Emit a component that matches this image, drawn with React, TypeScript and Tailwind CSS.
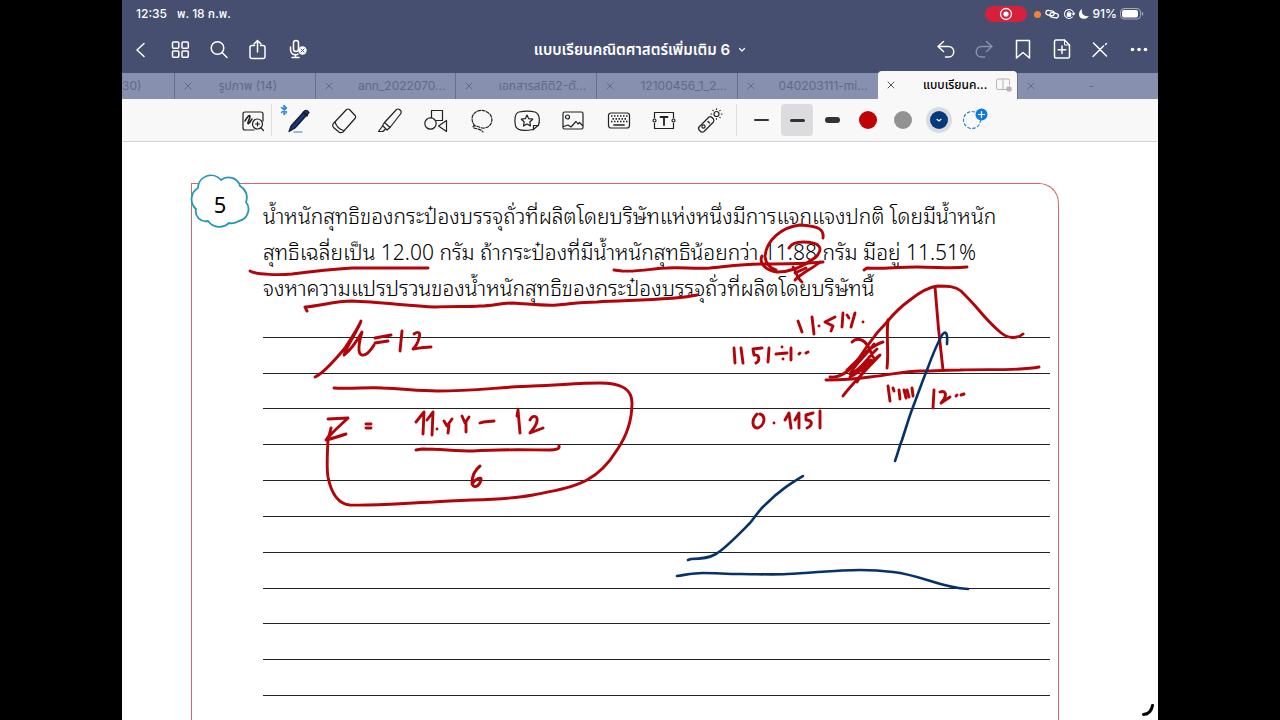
import type { ReactNode } from "react";

type IconProps = { children: ReactNode; size?: string; width?: number; view?: string };

function Icon({ children, size = "size-7", width = 1.2, view = "0 0 28 28" }: IconProps) {
  return (
    <svg
      className={`${size} shrink-0`}
      viewBox={view}
      fill="none"
      stroke="currentColor"
      strokeWidth={width}
      strokeLinecap="round"
      strokeLinejoin="round"
      aria-hidden="true"
    >
      {children}
    </svg>
  );
}

const navLeft = [
  { label: "Back", icon: <path d="M16 7.500 L9 14 L16 20.500" /> },
  {
    label: "Thumbnails",
    icon: (
      <>
        <rect x="5.500" y="6" width="6.300" height="6.300" rx="1" />
        <rect x="15" y="6" width="6.300" height="6.300" rx="1" />
        <rect x="5.500" y="15" width="6.300" height="6.300" rx="1" />
        <rect x="15" y="15" width="6.300" height="6.300" rx="1" />
      </>
    ),
  },
  {
    label: "Search",
    icon: (
      <>
        <circle cx="11.500" cy="12" r="6.300" />
        <path d="M16 16.500 L21 21.500" />
      </>
    ),
  },
  {
    label: "Share",
    icon: (
      <>
        <path d="M9.500 9.500 H7 Q5 9.500 5 11.500 V20.500 Q5 22.500 7 22.500 H18 Q20 22.500 20 20.500 V11.500 Q20 9.500 18 9.500 H15.500" />
        <path d="M12.500 16 V4.500 M9 8 L12.500 4.500 L16 8" />
      </>
    ),
  },
  {
    label: "Record",
    icon: (
      <>
        <rect x="9.500" y="4.500" width="5" height="11" rx="2.500" />
        <path d="M6.500 11 V13 C6.500 20 13 19 14 18 M11.500 18.500 V21.500 M8 21.500 H15" />
        <circle cx="18.500" cy="14.500" r="4.200" fill="currentColor" stroke="none" />
        <path d="M17 13 L20 16 M20 13 L17 16" stroke="#464f70" strokeWidth="1" />
      </>
    ),
  },
];

const navRight = [
  {
    label: "Undo",
    icon: <path d="M12.500 5.500 L7 10.500 L12.500 15.500 M7 10.500 H17.500 C24.500 10.500 24.500 21 17.500 21 H14.500" />,
  },
  {
    label: "Redo",
    faded: true,
    icon: <path d="M16.500 5.500 L22 10.500 L16.500 15.500 M22 10.500 H11.500 C4.500 10.500 4.500 21 11.500 21 H14.500" />,
  },
  { label: "Bookmark", icon: <path d="M7.500 4.500 H20.500 V22 L14 16.500 L7.500 22 Z" /> },
  {
    label: "Add page",
    icon: (
      <>
        <path d="M17.500 4 H9 Q7.500 4 7.500 5.500 V20.500 Q7.500 22 9 22 H21 Q22.500 22 22.500 20.500 V9 Z" />
        <path d="M17.500 4 V9 H22.500" strokeWidth="1" />
        <path d="M15 10 V17.500 M11.200 13.700 H18.800" />
      </>
    ),
  },
  {
    label: "Read only",
    icon: <path d="M7.500 7 L20.500 20 M8 19.500 L7 20.500 M8 19.500 L17.500 10 M19.500 8.500 L20.500 7.500" />,
  },
  {
    label: "More",
    icon: (
      <g fill="currentColor" stroke="none">
        <circle cx="7.500" cy="13.500" r="1.800" />
        <circle cx="14" cy="13.500" r="1.800" />
        <circle cx="20.500" cy="13.500" r="1.800" />
      </g>
    ),
  },
];

const tabs = [
  { name: "รูปภาพ (14)" },
  { name: "ann_2022070...", end: true },
  { name: "เอกสารสถิติ2-ตั...", end: true },
  { name: "12100456_1_2...", end: true },
  { name: "040203111-mi...", end: true },
  { name: "แบบเรียนค...", active: true },
  { name: "-" },
];

const tools = [
  {
    label: "Zoom window",
    icon: (
      <>
        <path d="M15 23 H6 Q4 23 4 21 V7 Q4 5 6 5 H22 Q24 5 24 7 V14" />
        <path d="M6 14 C8 10 11 7 11 9.500 C11 12 8 15.500 9 16.500 C10 17.500 12 13 13 12" strokeWidth="1.600" />
        <circle cx="18.500" cy="17" r="5" fill="#f8f8f8" />
        <path d="M22 21 L24.500 23.500 M18.500 15 V19 M16.500 17 H20.500" />
      </>
    ),
  },
  {
    label: "Pen",
    icon: (
      <>
        <path d="M4 24.500 L6 19 L20 3.500 Q22.500 2.500 24 5.500 L10 21 Z" fill="#173a74" stroke="#141c30" />
        <path d="M18.500 5.500 L22 8.500" stroke="#141c30" strokeWidth="2" />
        <path d="M9 25 H17" stroke="#3d7cb8" />
      </>
    ),
  },
  {
    label: "Eraser",
    icon: (
      <>
        <path d="M3 17 L16.500 2.500 Q18 1.500 19.500 2.500 L25.500 9 Q26 10.500 25 11.500 L13 25 Q11.500 26 9.500 25.500 L3.500 20.500 Q2 18.500 3 17 Z" />
        <path d="M5 15 Q7 21.500 13.500 23.500" />
      </>
    ),
  },
  {
    label: "Highlighter",
    icon: (
      <>
        <path d="M8.500 15.500 L20.500 2.500 Q22 1.500 23.500 2.500 L25 4 Q25.500 6 24.500 7 L14 20.500 Z" />
        <path d="M8.500 15.500 L6.500 18.500 L11 23 L14 20.500 M6.500 19 L2.500 24.500 L7 24.500 L9.500 22" />
      </>
    ),
  },
  {
    label: "Shape",
    icon: (
      <>
        <rect x="9.500" y="3.500" width="11" height="10" />
        <circle cx="8.500" cy="16.500" r="5.700" fill="#f8f8f8" />
        <path d="M24.500 13.500 V24.500 L16.500 19 Z" fill="#f8f8f8" />
      </>
    ),
  },
  {
    label: "Lasso",
    icon: (
      <path d="M7 19 C-1 9 9 1 17 4 C28 8 25 22 14 21 C10 20 6 17 5 20 C5 22 12 21 15 25" strokeDasharray="3 1.500" />
    ),
  },
  {
    label: "Stickers",
    icon: (
      <>
        <path d="M20 22.500 C12 24 4 24 2.500 19 C1 13 2 6 6 5 C11 4 18 4 22 5 C27 7 27 14 25.500 18 L20.500 22.500 V18.500 H25.500" />
        <path d="M14 8 L15.700 11.700 L19.700 12.200 L16.800 15 L17.500 18.900 L14 17 L10.500 18.900 L11.200 15 L8.300 12.200 L12.300 11.700 Z" />
      </>
    ),
  },
  {
    label: "Image",
    icon: (
      <>
        <rect x="4" y="5" width="20" height="17" rx="1.500" />
        <circle cx="8.500" cy="10" r="2" />
        <path d="M4.500 19.500 L9 18 L12 20 L17 14.500 L19 17 L20.500 15.500 L23.500 18.500" />
      </>
    ),
  },
  {
    label: "Keyboard",
    icon: (
      <>
        <rect x="3.500" y="6" width="21" height="15" rx="2.500" />
        <path
          d="M6 9 H22.500 M7.500 11.800 H21 M6 14.500 H22.500"
          strokeWidth="1.700"
          strokeDasharray="1.500 1.500"
          strokeLinecap="butt"
        />
        <path d="M9 18 H19" strokeWidth="1.700" />
      </>
    ),
  },
  {
    label: "Text",
    icon: (
      <>
        <path d="M4.500 11 V5.500 H23.500 V11 M4.500 16 V21.500 H23.500 V16" />
        <circle cx="4.500" cy="13.500" r="1.500" />
        <circle cx="23.500" cy="13.500" r="1.500" />
        <path d="M10.500 10 H17.500 M14 10 V18" strokeWidth="1.800" />
      </>
    ),
  },
  {
    label: "Laser pointer",
    icon: (
      <>
        <path d="M3 20 L13 10 Q14.500 9 16 10.500 L17.500 12 Q18.500 13.500 17.500 15 L8 24.500 Q6 26 4 24 Q1.500 21.500 3 20 Z" />
        <circle cx="7.500" cy="19.500" r="1.600" />
        <path d="M12 14.500 L13.500 16" />
        <circle cx="20.500" cy="7" r="2.500" />
        <path d="M20.500 1.800 V2.500 M20.500 11.500 V12.200 M26 7 H25.300 M15.700 7 H15 M16.800 3.300 L17.200 3.700 M24.200 10.700 L23.800 10.300 M24.200 3.300 L23.800 3.700" />
      </>
    ),
  },
];

function StatusBar() {
  return (
    <div className="flex h-7 items-center justify-between pr-[14px] pl-[14px] text-xs font-medium">
      <div className="flex gap-[10px]">
        <span>12:35</span>
        <span>พ. 18 ก.พ.</span>
      </div>
      <div className="flex items-center gap-[3px]">
        <span className="mr-1 flex h-4 w-[42px] items-center justify-center rounded-lg bg-[#d6203c]">
          <Icon size="size-4" view="0 0 16 16" width={1.300}>
            <circle cx="8" cy="8" r="5.500" />
            <circle cx="8" cy="8" r="2.600" fill="currentColor" stroke="none" />
          </Icon>
        </span>
        <span className="size-[7px] rounded-full bg-[#ee8438]" />
        <Icon size="size-4" view="0 0 16 16" width={1.300}>
          <rect x="2" y="4.500" width="8.500" height="4.500" rx="2.200" transform="rotate(12 5 6)" />
          <rect x="6" y="7" width="8.500" height="4.500" rx="2.200" transform="rotate(12 10 9)" />
        </Icon>
        <Icon size="size-3" view="0 0 14 14" width={1.200}>
          <path d="M11 10.500 A5.300 5.300 0 1 1 12.300 6.500 M10.500 6.500 L12.300 8 L13.700 6" />
          <rect x="5" y="6.500" width="4" height="3" fill="currentColor" />
          <path d="M5.500 6.500 V5.500 Q7 3 8.500 5.500 V6.500" />
        </Icon>
        <Icon size="size-3" view="0 0 12 12">
          <path d="M4 1 C3 6 6 9 11 8 C8 12.500 0.500 11.500 1 6 C1.200 3.500 2.500 1.500 4 1 Z" fill="currentColor" stroke="none" />
        </Icon>
        <span>91%</span>
        <Icon size="h-3 w-6" view="0 0 24 12">
          <rect x="0.500" y="0.500" width="20" height="10.500" rx="3.500" stroke="#a3a9bd" strokeWidth="1" />
          <rect x="2" y="2" width="16" height="7.500" rx="2" fill="currentColor" stroke="none" />
          <path d="M22.500 4.500 V7" stroke="#a3a9bd" />
        </Icon>
      </div>
    </div>
  );
}

function NavBar() {
  return (
    <div className="flex h-[45px] items-start">
      <div className="flex w-[232px]">
        {navLeft.map((item) => (
          <button key={item.label} aria-label={item.label} className="flex h-11 w-[39px] items-center justify-center">
            <Icon width={1.500}>{item.icon}</Icon>
          </button>
        ))}
      </div>
      <h1 className="flex h-11 flex-1 items-center justify-center gap-2 text-[15px] font-semibold whitespace-nowrap">
        แบบเรียนคณิตศาสตร์เพิ่มเติม 6
        <Icon size="size-2" view="0 0 8 8">
          <path d="M1.500 2.500 L4 5 L6.500 2.500" />
        </Icon>
      </h1>
      <div className="flex w-[232px]">
        {navRight.map((item) => (
          <button
            key={item.label}
            aria-label={item.label}
            className={`flex h-11 flex-1 items-center justify-center ${item.faded ? "text-[#8a91ab]" : ""}`}
          >
            <Icon width={1.500}>{item.icon}</Icon>
          </button>
        ))}
      </div>
    </div>
  );
}

function TabStrip() {
  return (
    <div className="flex h-[26px] shrink-0 items-end bg-[#8790ae] text-xs text-[#626a89]">
      <div className="flex h-[26px] w-[52px] items-center">30)</div>
      {tabs.map((tab) => (
        <div
          key={tab.name}
          className={`flex min-w-0 flex-1 items-center pl-2 whitespace-nowrap ${
            tab.active ? "h-7 rounded-t bg-[#f8f8f8] font-medium text-black" : "h-[26px] border-l border-[#656e8e]"
          }`}
        >
          <button aria-label="Close tab" className={tab.active ? "text-[#555555]" : ""}>
            <Icon size="size-[10px]" view="0 0 10 10" width={1}>
              <path d="M2 2 L8 8 M8 2 L2 8" />
            </Icon>
          </button>
          <span
            className={`flex-1 ${tab.active ? "pr-3 text-right" : tab.end ? "pr-[10px] text-right" : "pr-3 text-center"}`}
          >
            {tab.name}
          </span>
          {tab.active && (
            <span className="mr-1 -ml-1 text-[#b5b5b8]">
              <Icon size="h-4 w-[18px]" view="0 0 18 16" width={1}>
                <path d="M11 12.500 H3 Q1.500 12.500 1.500 11 V3.500 Q1.500 2 3 2 H13 Q14.500 2 14.500 3.500 V7.500 M8 2 V12.500" />
                <circle cx="14" cy="12" r="2.800" fill="currentColor" stroke="none" />
              </Icon>
            </span>
          )}
        </div>
      ))}
    </div>
  );
}

function Toolbar() {
  return (
    <div className="flex h-[43px] shrink-0 items-center border-b border-[#d4d4d6] bg-[#f8f8f8] pl-[108px] text-[#222222]">
      <div className="flex w-[503px]">
        {tools.map((tool) => (
          <button
            key={tool.label}
            aria-label={tool.label}
            className="relative flex h-8 flex-1 items-center justify-center pt-[2px]"
          >
            <Icon>{tool.icon}</Icon>
            {tool.label === "Zoom window" && <span className="absolute top-0 right-1 h-8 w-px bg-[#dedee0]" />}
            {tool.label === "Pen" && (
              <span className="absolute top-0 left-1 text-[#2a86e0]">
                <Icon size="h-3 w-2" view="0 0 8 12" width={1.500}>
                  <path d="M1.500 3.500 L6.500 8 L4 10.500 V1.500 L6.500 4 L1.500 8.500" />
                </Icon>
              </span>
            )}
          </button>
        ))}
      </div>
      <div className="ml-[3px] h-8 w-px bg-[#dedee0]" />
      <div className="ml-[7px] flex w-[248px]">
        <button aria-label="Thin stroke" className="flex h-8 flex-1 items-center justify-center">
          <span className="h-[2px] w-[15px] rounded-full bg-[#333333]" />
        </button>
        <button aria-label="Medium stroke" className="flex h-8 flex-1 items-center justify-center">
          <span className="flex h-8 w-8 items-center justify-center rounded bg-[#dcdcde]">
            <span className="h-[3px] w-[15px] rounded-full bg-[#333333]" />
          </span>
        </button>
        <button aria-label="Thick stroke" className="flex h-8 flex-1 items-center justify-center">
          <span className="h-[6px] w-[15px] rounded-full bg-[#333333]" />
        </button>
        <button aria-label="Red" className="flex h-8 flex-1 items-center justify-center">
          <span className="size-[18px] rounded-full bg-[#c00207]" />
        </button>
        <button aria-label="Gray" className="flex h-8 flex-1 items-center justify-center">
          <span className="size-[18px] rounded-full bg-[#929292]" />
        </button>
        <button aria-label="Blue" className="flex h-8 flex-1 items-center justify-center">
          <span className="flex size-[26px] items-center justify-center rounded-full bg-[#dcdcde]">
            <span className="flex size-[18px] items-center justify-center rounded-full bg-[#043a7c] text-white">
              <Icon size="size-2" view="0 0 8 8">
                <path d="M2 3.300 L4 5 L6 3.300" />
              </Icon>
            </span>
          </span>
        </button>
        <button aria-label="Add color" className="flex h-8 flex-1 items-center justify-center">
          <Icon>
            <circle cx="12" cy="14" r="8.500" stroke="#3385cf" strokeDasharray="2.500 2.500" />
            <circle cx="21.500" cy="8.500" r="6" fill="#0d7be0" stroke="none" />
            <path d="M21.500 5.500 V11.500 M18.500 8.500 H24.500" stroke="#ffffff" />
          </Icon>
        </button>
      </div>
    </div>
  );
}

const redInk = [
  "M250 271 C257 275 280 275 292 274 C315 271 335 269 352 268 L428 268",
  "M307 311 L305 307 C320 306 335 301 352 301 C380 302 410 306 435 307 C455 306 468 307 480 306 C493 306 500 303 513 303 C530 304 545 306 557 305 C570 304 580 302 597 302 C630 300 675 300 697 295",
  "M614 270 L622 271 C640 272 655 268 667 268 C680 267 695 269 710 268 C730 266 745 264 760 264 C785 264 803 264 823 262",
  "M823 238 C824 230 820 226 800 225 C782 227 766 240 765 257 C766 264 770 268 776 270",
  "M762 256 C759 262 764 270 777 272 C793 272 807 264 816 257 C824 248 820 242 803 242 C797 242 791 244 789 248",
  "M793 267 C796 270 796 277 802 282 M820 262 C812 269 803 272 795 280 M795 273 L806 268",
  "M864 270 L867 268 C885 269 895 267 917 267 C940 267 950 269 967 267",
  "M315 377 C322 374 335 360 345 348 C352 337 358 328 361 321 C359 329 347 345 344 355 C351 350 358 339 362 332 C359 342 357 354 362 355 C367 356 371 350 374 345",
  "M375 338 L391 335 M375 343 L388 341 M402 331 L400 351 M414 334 C418 331 421 332 419 338 C418 343 415 347 413 349 C419 348 425 347 431 347",
  "M334 388 C350 389 370 387 383 388 C405 389 420 391 437 391 C475 391 500 387 533 386 C560 385 580 383 600 383 C618 383 632 387 632 403 C632 420 628 434 617 450 C609 463 600 473 587 480 C572 488 553 491 533 495 C500 501 470 499 433 502 C405 503 375 506 350 505 C338 504 331 492 328 477 C326 464 328 448 328 437",
  "M328 419 L348 418 C342 424 334 430 326 440 C334 438 340 436 346 434 M331 428 L328 440",
  "M366 424 H371 M366 428 H371",
  "M416 422 L424 412 L423 434 M427 420 L433 412 L432 435 M437 429 V429 M444 421 L447 426 L452 419 M449 425 L448 433 M462 416 L465 423 L469 417 M466 422 V432",
  "M480 423 C485 421 489 422 494 421 M517 416 L518 410 L520 433 M530 420 C532 415 538 415 537 421 C536 427 532 430 530 433 L543 428",
  "M416 450 L422 449 C440 449 455 451 473 451 C500 449 530 450 550 450 C555 450 560 449 559 446",
  "M480 466 C475 470 472 476 472 483 C473 489 479 487 481 480 C482 476 475 479 472 484",
  "M798 321 L802 332 M812 317 L814 334 M819 326 V326 M835 317 L825 322 L833 326 L831 331 M843 313 L842 327 M847 315 L849 318 M855 313 L851 327 M863 322 V322",
  "M734 348 L735 363 M741 348 L743 363 M762 348 L753 349 L754 355 C760 354 760 361 756 363 M769 348 L768 362 M776 354 L787 353 M782 347 V347 M783 359 V359 M791 348 V360 M799 354 L800 353 M806 353 L808 352",
  "M757 414 C751 420 752 428 758 428 C765 425 766 416 760 414 M774 423 V423 M785 420 L789 413 L791 428 M795 420 L799 413 L799 428 M813 413 L806 415 L806 420 C814 420 812 426 807 428 M820 411 V428",
  "M830 377 C838 378 844 374 849 370 C858 362 862 353 868 345 C874 336 880 329 887 322 C895 312 903 305 910 300 C920 292 928 287 938 286 C947 286 955 286 961 291 C967 297 971 301 977 308 C987 320 992 325 1000 332 C1008 339 1017 339 1023 334",
  "M826 380 C842 380 856 379 870 377 C890 375 905 371 920 371 C935 371 948 370 960 370 C990 369 1020 371 1039 367",
  "M935 287 C937 315 940 345 943 370 M888 320 C886 337 889 352 887 368",
  "M852 342 C858 336 865 341 868 346 C871 351 872 357 874 358 M883 342 C870 346 860 358 847 370 M874 344 C865 357 856 363 850 374 C860 371 868 357 877 349 M850 377 C862 371 871 362 880 355 C868 368 852 384 843 396 M852 374 C860 374 864 364 871 360 M857 382 L866 367",
  "M888 386 L890 401 M893 388 L894 391 M899 390 L900 399 M904 390 L906 398 M907 390 L909 397 M912 388 L913 396",
  "M934 390 L933 408 M940 392 C945 390 947 394 944 399 L941 403 L950 397 M956 396 L957 395 M961 395 L964 394",
];

const blueInk = [
  "M895 461 C898 453 899 447 902 440 C906 428 909 417 913 407 C918 394 922 382 927 370 C931 359 936 346 942 335 C945 331 948 331 947 344",
  "M688 560 L691 559 C701 559 709 558 716 554 C727 547 740 533 750 523 C756 516 758 511 766 504 C780 490 790 484 803 476",
  "M677 576 C685 575 693 573 703 573 C717 573 725 574 740 574 C757 574 772 575 787 574 C813 573 835 570 860 570 C875 570 885 571 893 572 C922 575 940 588 968 589",
];

function Ink() {
  return (
    <svg
      className="pointer-events-none absolute top-0 left-0 h-[578px] w-[1036px]"
      viewBox="122 142 1036 578"
      fill="none"
      strokeLinecap="round"
      strokeLinejoin="round"
      role="img"
      aria-label="Handwritten working"
    >
      <g stroke="#b20409" strokeWidth="2.900">
        {redInk.map((d) => (
          <path key={d} d={d} />
        ))}
      </g>
      <g stroke="#06326b" strokeWidth="2.600">
        {blueInk.map((d) => (
          <path key={d} d={d} />
        ))}
      </g>
    </svg>
  );
}

function Worksheet() {
  return (
    <main className="relative min-h-0 flex-1 overflow-hidden bg-white pt-[41px] pr-[99px] pl-[69px]">
      <div className="relative h-full rounded-t-[20px] rounded-tl-none border border-b-0 border-[#d06a6e] pr-2 pl-[71px]">
        <div className="absolute -top-3 -left-[3px] flex h-[60px] w-[62px] items-center justify-center">
          <svg className="absolute inset-0 size-full" viewBox="189 170 62 60" aria-hidden="true">
            <path
              d="M221 178 A12 12 0 0 1 240 184 A13 13 0 0 1 246 200 A12 12 0 0 1 239 219 A13 13 0 0 1 229 221 A14 14 0 0 1 208 219 A10 10 0 0 1 196 207 A13 13 0 0 1 198 186 A13 13 0 0 1 221 178 Z"
              fill="#ffffff"
              stroke="#2497b5"
              strokeWidth="1.800"
              strokeLinejoin="round"
            />
          </svg>
          <span className="relative mt-1 font-['Noto_Sans'] text-[22px] text-black">5</span>
        </div>
        <p className="pt-[13px] font-['Noto_Sans_Thai_Looped','Sarabun','TH_Sarabun_New','Garuda','Loma','Noto_Sans','Noto_Sans_Thai',sans-serif] text-[21px] leading-9 font-light whitespace-nowrap text-black">
          น้ำหนักสุทธิของกระป๋องบรรจุถั่วที่ผลิตโดยบริษัทแห่งหนึ่งมีการแจกแจงปกติ โดยมีน้ำหนัก
          <br />
          สุทธิเฉลี่ยเป็น 12.00 กรัม ถ้ากระป๋องที่มีน้ำหนักสุทธิน้อยกว่า 11.88 กรัม มีอยู่ 11.51%
          <br />
          จงหาความแปรปรวนของน้ำหนักสุทธิของกระป๋องบรรจุถั่วที่ผลิตโดยบริษัทนี้
        </p>
        <div className="-mt-[3px] flex h-[394px] flex-col">
          {Array.from({ length: 11 }, (_, i) => (
            <div key={i} className="flex-1 border-b border-[#222222]" />
          ))}
        </div>
      </div>
      <Ink />
      <svg className="absolute right-1 bottom-1 size-3" viewBox="0 0 12 12" fill="none" aria-hidden="true">
        <path d="M1.500 10.500 Q9 10 10.500 1.500" stroke="#000000" strokeWidth="3" strokeLinecap="round" />
      </svg>
    </main>
  );
}

export default function App() {
  return (
    <div className="h-screen bg-black px-[122px] font-['Inter','Noto_Sans_Thai','Loma',sans-serif]">
      <div className="flex h-full flex-col">
        <header className="shrink-0 bg-[#464f70] text-white">
          <StatusBar />
          <NavBar />
        </header>
        <TabStrip />
        <Toolbar />
        <Worksheet />
      </div>
    </div>
  );
}
